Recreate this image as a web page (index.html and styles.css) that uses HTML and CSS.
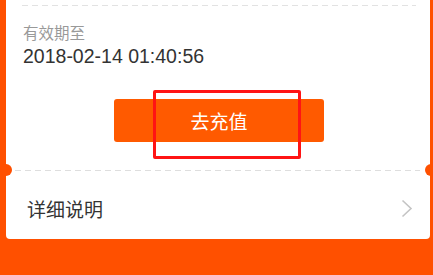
FILE: index.html
```html
<!DOCTYPE html>
<html lang="zh">
<head>
<meta charset="utf-8">
<link rel="stylesheet" href="styles.css">
</head>
<body>
<div class="page">
  <div class="card">
    <div class="dash dash-top"></div>
    <div class="info">
      <div class="label">有效期至</div>
      <div class="date">2018-02-14 01:40:56</div>
    </div>
    <div class="btn-wrap">
      <div class="btn">去充值</div>
      <div class="highlight"></div>
    </div>
    <div class="divider"></div>
    <div class="row">
      <span class="row-title">详细说明</span>
      <svg class="chev" width="12" height="19" viewBox="0 0 12 19"><polyline points="1.5,1.5 10,9.5 1.5,17.5" fill="none" stroke="#c4c4c4" stroke-width="1.6"/></svg>
    </div>
  </div>
</div>
</body>
</html>
```

FILE: styles.css
```css
html, body {
  margin: 0;
  padding: 0;
}
body {
  width: 433px;
  height: 275px;
  overflow: hidden;
  background: #ff5000;
  font-family: "Liberation Sans", "Noto Sans CJK SC", sans-serif;
}
.page {
  padding: 0 3px 0 6px;
}
.card {
  background: #fff;
  height: 239px;
  border-radius: 0 0 4px 4px;
  display: flex;
  flex-direction: column;
}
.dash {
  height: 1px;
  background: repeating-linear-gradient(to right, #e2e2e2 0 6px, transparent 6px 10px);
}
.dash-top {
  margin: 5px 14px 0 16px;
}
.info {
  padding: 18px 0 0 17px;
}
.label {
  font-size: 15.5px;
  line-height: 19px;
  color: #999;
}
.date {
  font-size: 19.5px;
  line-height: 24px;
  color: #333;
  margin-top: 1px;
}
.btn-wrap {
  position: relative;
  margin-top: 31px;
  display: flex;
  justify-content: center;
}
.btn {
  width: 210px;
  height: 43px;
  border-radius: 3px;
  background: #ff5a00;
  color: #fff;
  font-size: 19px;
  display: flex;
  align-items: center;
  justify-content: center;
  margin-left: 2px;
}
.highlight {
  position: absolute;
  left: 147px;
  top: -9px;
  width: 142px;
  height: 63px;
  border: 3px solid #ff1414;
  border-radius: 2px;
}
.divider {
  position: relative;
  margin: 28px 10px 0 9px;
  height: 1px;
  background: repeating-linear-gradient(to right, #dedede 0 6px, transparent 6px 10px);
}
.divider::before,
.divider::after {
  content: "";
  position: absolute;
  top: -6px;
  width: 12px;
  height: 12px;
  border-radius: 50%;
  background: #ff5000;
}
.divider::before {
  left: -15px;
}
.divider::after {
  right: -17px;
}
.row {
  flex: 1;
  display: flex;
  align-items: center;
  justify-content: space-between;
  padding: 6px 17px 0 21px;
}
.row-title {
  font-size: 19px;
  color: #333;
}
.chev {
  display: block;
}
```
